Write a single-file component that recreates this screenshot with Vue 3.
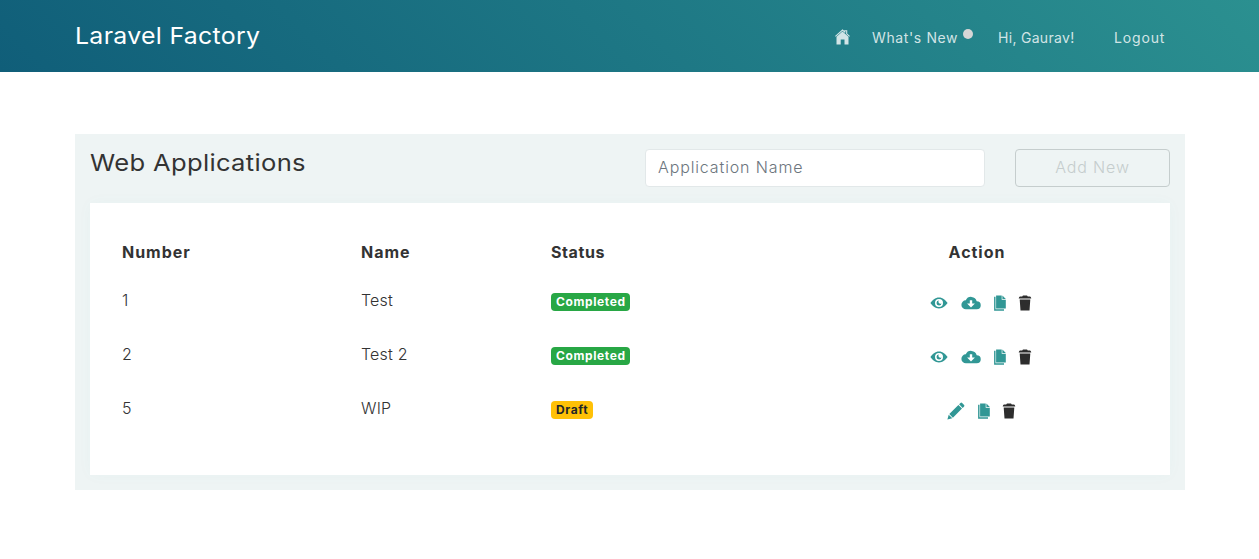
<script setup>
import { ref } from 'vue'

const name = ref('')

const applications = [
  { id: 1, name: 'Test', status: 'Completed' },
  { id: 2, name: 'Test 2', status: 'Completed' },
  { id: 5, name: 'WIP', status: 'Draft' },
]
</script>

<template>
  <div class="page">
    <header class="topbar">
      <div class="container topbar-inner">
        <a class="brand"><span>Laravel Factory</span></a>
        <nav class="nav">
          <a class="home" aria-label="Home">
            <svg width="15" height="16" viewBox="0 0 15 16">
              <path d="M0.4 7.4 7.5 1l2.2 2V1.800h2v3l2.900 2.600" fill="none" stroke="currentColor" stroke-width="1.100" />
              <path d="M7.500 2.500 13.500 7.800V15.500H9.500V10.500H5.700V15.500H1.500V7.800z" fill="currentColor" />
            </svg>
          </a>
          <a class="news"><span>What's New</span><i class="dot"></i></a>
          <a class="user"><span>Hi, Gaurav!</span></a>
          <a class="logout"><span>Logout</span></a>
        </nav>
      </div>
    </header>

    <main class="container panel">
      <div class="toolbar">
        <h1 class="title"><span>Web Applications</span></h1>
        <input v-model="name" class="field" type="text" placeholder="Application Name" />
        <button class="add" :disabled="!name"><span>Add New</span></button>
      </div>

      <section class="card">
        <div class="row head">
          <span>Number</span>
          <span>Name</span>
          <span class="th-status">Status</span>
          <span class="center">Action</span>
        </div>
        <div v-for="app in applications" :key="app.id" class="row">
          <span>{{ app.id }}</span>
          <span>{{ app.name }}</span>
          <div class="status">
            <span class="badge" :class="app.status.toLowerCase()">{{ app.status }}</span>
          </div>
          <div class="actions">
            <template v-if="app.status === 'Completed'">
              <svg class="eye" width="18" height="12" viewBox="0 0 18 12">
                <path fill="currentColor" fill-rule="evenodd" d="M9 .6C5.200.6 2.400 3.300.4 6c2 2.700 4.800 5.400 8.600 5.400s6.600-2.700 8.600-5.400C15.600 3.300 12.800.6 9 .6zM9 2a4 4 0 1 1 0 8 4 4 0 0 1 0-8z" />
                <path fill="currentColor" d="M9 3.500a2.500 2.500 0 1 0 2.500 2.700A1.400 1.400 0 0 1 9 3.500z" />
              </svg>
              <svg class="cloud" width="20" height="14" viewBox="0 0 20 14">
                <path fill="currentColor" fill-rule="evenodd" d="M15.700 5.200A5.800 5.800 0 0 0 4.800 4.300 4.500 4.500 0 0 0 5 13.300h10.700a4 4 0 0 0 0-8.100zM8.800 4.200h2.400v3.400h2.700L10 11.500 6.100 7.600h2.700z" />
              </svg>
            </template>
            <svg v-else class="pencil" width="18" height="18" viewBox="0 0 18 18">
              <path fill="currentColor" d="M.4 17.600 1.700 12.700 5.300 16.300zM2.300 12.100 11.400 3l3.600 3.600-9.100 9.100zM12.100 2.300 13.500.9q.8-.7 1.600 0l2 2q.7.800 0 1.600L15.700 5.900z" />
            </svg>
            <svg class="copy" width="12" height="16" viewBox="0 0 12 16">
              <path fill="currentColor" d="M2.100.5H7.700v4.300h4.100v8.800H2.100z" />
              <path fill="currentColor" d="M8.400.5 11.800 4.100H8.400z" />
              <path fill="none" stroke="currentColor" stroke-width="1.400" d="M.8 1.800v13.200h9.200" />
            </svg>
            <svg class="trash" width="14" height="16" viewBox="0 0 14 16">
              <path fill="currentColor" d="M5 .4h4l.8 1.200h2.300q1 .6 1.200 1.900H.7q.2-1.300 1.200-1.900h2.300zM1.700 4.500h10.600l-.8 11H2.500z" />
            </svg>
          </div>
        </div>
      </section>
    </main>
  </div>
</template>

<style>
body {
  margin: 0;
  background: #fff;
}
</style>

<style scoped>
* {
  box-sizing: border-box;
}

.page {
  min-height: 559px;
  font-family: Inter, "Open Sans", sans-serif;
  font-size: 16px;
  font-weight: 300;
  line-height: 24px;
  color: #333;
}

.container {
  width: 1110px;
  margin-left: 75px;
}

.topbar {
  height: 72px;
  background: linear-gradient(45deg, #105e79, #2b9090);
}

.topbar-inner {
  display: flex;
  justify-content: space-between;
}

.brand {
  padding-top: 18px;
  font-size: 23.500px;
  font-weight: 400;
  line-height: 36px;
  letter-spacing: 0.300px;
  color: #fff;
}

.brand span,
.title span {
  display: inline-block;
  transform: scaleX(1.057);
  transform-origin: left;
}

.nav {
  display: flex;
  padding: 26px 20px 0 0;
  font-size: 14px;
  font-weight: 400;
  color: rgba(255, 255, 255, 0.800);
}

.home {
  width: 37px;
  padding-top: 3px;
}

.home svg {
  display: block;
}

.news {
  display: flex;
  width: 126px;
  letter-spacing: 0.620px;
}

.dot {
  width: 10px;
  height: 10px;
  margin: 3px 0 0 5px;
  border-radius: 50%;
  background: #d6d6d6;
}

.user {
  width: 116px;
  letter-spacing: 0.300px;
}

.logout {
  width: 51px;
  letter-spacing: 0.850px;
}

.panel {
  height: 356px;
  margin-top: 62px;
  padding: 15px;
  background: #eef4f4;
}

.toolbar {
  display: flex;
  height: 54px;
}

.title {
  width: 555px;
  margin: -1px 0 0;
  font-size: 23.500px;
  font-weight: 400;
  line-height: 29px;
  letter-spacing: 0.300px;
}

.title span {
  transform: scaleX(1.088);
}

.field {
  width: 340px;
  height: 38px;
  margin-right: 30px;
  padding: 0 12px 2px;
  border: 1px solid #e2e8e9;
  border-radius: 4px;
  background: #fff;
  font: inherit;
  letter-spacing: 0.870px;
  color: #495057;
}

.field::placeholder {
  color: #6c757d;
  opacity: 1;
}

.add {
  width: 155px;
  height: 38px;
  padding: 0 0 2px;
  border: 1px solid #c5cdcd;
  border-radius: 4px;
  background: transparent;
  font: inherit;
  letter-spacing: 0.850px;
  color: #c5cdcd;
}

.card {
  height: 272px;
  padding: 28px 20px 0;
  background: #fff;
  box-shadow: 0 0 15px rgba(44, 144, 144, 0.030);
}

.row {
  display: grid;
  grid-template-columns: 239px 190px 264px 347px;
  align-items: center;
  height: 54px;
  letter-spacing: 0.200px;
}

.row > * {
  padding: 0 12px;
}

.head {
  height: 42px;
  font-weight: 700;
  letter-spacing: 0.980px;
}

.th-status {
  letter-spacing: 0.600px;
}

.row > .center {
  padding-left: 13px;
  text-align: center;
}

.status {
  display: flex;
}

.badge {
  height: 18px;
  margin-top: 3px;
  padding: 0 4px 0 5px;
  border-radius: 4px;
  font-size: 12px;
  font-weight: 700;
  line-height: 18px;
  letter-spacing: 0.620px;
}

.completed {
  background: #28a745;
  color: #fff;
}

.draft {
  padding-right: 5px;
  background: #ffc107;
  color: #212529;
}

.row > .actions {
  display: flex;
  align-items: center;
  justify-content: center;
  padding: 6px 8px 0 17px;
  color: #319795;
}

.eye,
.cloud,
.pencil {
  margin-right: 13px;
}

.copy {
  margin-right: 12px;
}

.trash {
  color: #2d2d2d;
}
</style>
